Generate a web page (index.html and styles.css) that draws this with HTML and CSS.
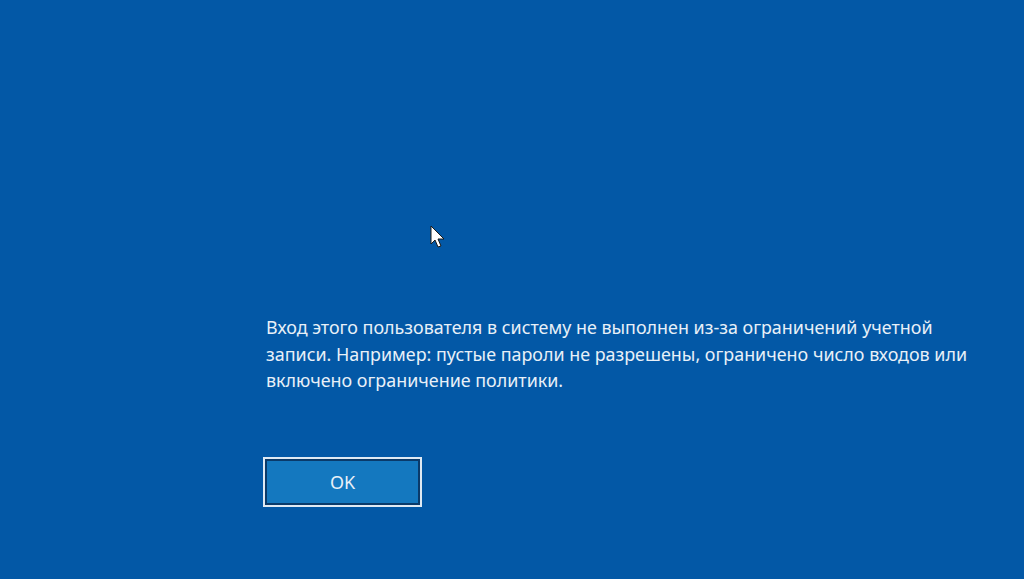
FILE: index.html
```html
<!DOCTYPE html>
<html lang="ru">
<head>
<meta charset="utf-8">
<link rel="stylesheet" href="styles.css">
</head>
<body>
<div class="screen">
  <div class="dialog">
    <p class="message">Вход этого пользователя в систему не выполнен из-за ограничений учетной записи. Например: пустые пароли не разрешены, ограничено число входов или включено ограничение политики.</p>
    <button class="ok">OK</button>
  </div>
  <svg class="cursor" width="16" height="24" viewBox="0 0 16 24">
    <path d="M1 1 L1 19 L5 15 L8 22 L11 21 L8 14 L14 14 Z" fill="#fff" stroke="#1a1a1a" stroke-width="1" stroke-linejoin="miter"/>
  </svg>
</div>
</body>
</html>
```

FILE: styles.css
```css
html, body {
  margin: 0;
  padding: 0;
  height: 100%;
}
body {
  background: #0358a6;
  font-family: "Noto Sans", "Open Sans", sans-serif;
  overflow: hidden;
}
.screen {
  position: relative;
  height: 579px;
}
.dialog {
  display: flex;
  flex-direction: column;
  align-items: flex-start;
  padding: 314px 0 0 266px;
}
.message {
  margin: 0;
  width: 715px;
  color: #e8f0f8;
  font-size: 17.9px;
  line-height: 26.5px;
}
.ok {
  margin: 63px 0 0 -3px;
  width: 159px;
  height: 50px;
  background: #1478bf;
  border: 2px solid #dfe9f3;
  box-shadow: inset 0 0 0 2px #0a3a6a;
  color: #e8f0f8;
  font-family: inherit;
  font-size: 18px;
  padding: 0;
}
.cursor {
  position: absolute;
  left: 430px;
  top: 225px;
}
```
